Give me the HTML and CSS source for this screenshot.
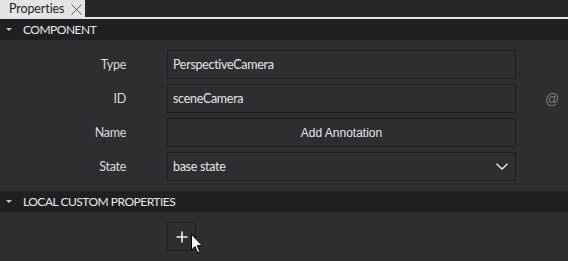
FILE: index.html
```html
<!DOCTYPE html>
<html lang="en">
<head>
  <meta charset="UTF-8">
  <title>Properties</title>
  <link rel="stylesheet" href="styles.css">
</head>
<body>
  <div class="tabbar">
    <div class="tab">
      <span>Properties</span>
      <svg class="tab-close" width="11" height="11" viewBox="0 0 11 11"><path d="M0.5 0.5 L10.5 10.5 M10.5 0.5 L0.5 10.5" stroke="#555555" stroke-width="1"/></svg>
    </div>
  </div>

  <div class="section-header">
    <span class="caret"></span>
    <span>COMPONENT</span>
  </div>
  <div class="section-body">
    <div class="row">
      <div class="label">Type</div>
      <div class="field">PerspectiveCamera</div>
    </div>
    <div class="row">
      <div class="label">ID</div>
      <div class="field">sceneCamera</div>
      <div class="extra">@</div>
    </div>
    <div class="row">
      <div class="label">Name</div>
      <div class="field button">Add Annotation</div>
    </div>
    <div class="row">
      <div class="label">State</div>
      <div class="field combo">
        <span>base state</span>
        <svg width="12" height="8" viewBox="0 0 12 8"><path d="M0.5 0.8 L6 6 L11.5 0.8" fill="none" stroke="#e8e8e8" stroke-width="1.4"/></svg>
      </div>
    </div>
  </div>

  <div class="section-header">
    <span class="caret"></span>
    <span>LOCAL CUSTOM PROPERTIES</span>
  </div>
  <div class="section-body custom">
    <div class="add-btn">
      <svg width="12" height="12" viewBox="0 0 12 12"><path d="M6 0.5 V11.5 M0.5 6 H11.5" stroke="#f0f0f0" stroke-width="1.6"/></svg>
      <svg class="cursor" width="14" height="21" viewBox="0 0 14 21"><path d="M0.5 0.5 L0.5 16 L4 12.5 L6.8 19 L9 18 L6.3 11.6 L11.2 11.6 Z" fill="#ffffff" stroke="#000000" stroke-width="1"/></svg>
    </div>
  </div>
</body>
</html>
```

FILE: styles.css
```css
body {
    margin: 0;
    background: #2d2e30;
    font-family: Lato, "Noto Sans", sans-serif;
    font-size: 12.5px;
    letter-spacing: -0.3px;
    color: #e0e0e0;
    height: 261px;
    overflow: hidden;
}
.tabbar {
    height: 17px;
    background: #262626;
    border-bottom: 2px solid #e4e4e4;
    display: flex;
}
.tab {
    width: 85px;
    height: 17px;
    background: #e4e4e4;
    color: #1e1e1e;
    display: flex;
    align-items: center;
    padding-left: 9px;
    box-sizing: border-box;
    gap: 7px;
    font-size: 12.5px;
    letter-spacing: -0.1px;
}
.tab-close {
    margin-top: 1px;
}
.section-header {
    height: 21px;
    background: #202020;
    display: flex;
    align-items: center;
    color: #e8e8e8;
    font-size: 12px;
    letter-spacing: -0.5px;
}
.caret {
    width: 0;
    height: 0;
    border-left: 3px solid transparent;
    border-right: 3px solid transparent;
    border-top: 3px solid #c8c8c8;
    margin-left: 6px;
    margin-right: 11px;
}
.section-body {
    padding: 10px 0;
    display: flex;
    flex-direction: column;
    gap: 5px;
}
.row {
    display: flex;
    align-items: center;
    height: 29px;
}
.label {
    width: 126px;
    text-align: right;
    margin-right: 41px;
    color: #dcdcdc;
}
.field {
    width: 349px;
    height: 29px;
    box-sizing: border-box;
    border: 1px solid #1c1c1c;
    background: #2d2e30;
    display: flex;
    align-items: center;
    padding-left: 5px;
    color: #e6e6e6;
}
.field.button {
    justify-content: center;
    padding-left: 0;
    font-family: "Liberation Sans", Arial, sans-serif;
    font-size: 12px;
    letter-spacing: 0;
}
.field.combo {
    justify-content: space-between;
    padding-right: 7px;
}
.extra {
    margin-left: 29px;
    color: #7c7f84;
    font-family: "Liberation Sans", Arial, sans-serif;
    font-size: 14px;
}
.custom {
    padding-left: 167px;
}
.add-btn {
    width: 29px;
    height: 29px;
    box-sizing: border-box;
    border: 1px solid #1c1c1c;
    display: flex;
    align-items: center;
    justify-content: center;
    position: relative;
}
.cursor {
    position: absolute;
    left: 23px;
    top: 11px;
}
```
